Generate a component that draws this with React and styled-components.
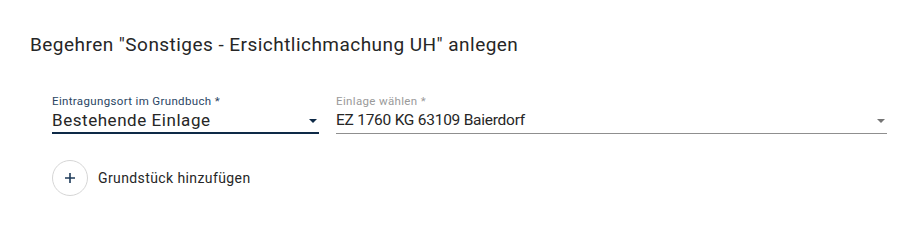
import React from 'react';
import styled, { createGlobalStyle } from 'styled-components';

const GlobalStyle = createGlobalStyle`
  html, body {
    margin: 0;
    padding: 0;
    background: #ffffff;
  }
  body {
    font-family: Roboto, "Noto Sans", "Liberation Sans", sans-serif;
    color: #212121;
  }
`;

const Page = styled.div`
  width: 901px;
  height: 226px;
  box-sizing: border-box;
  padding: 33px 14px 0 30px;
`;

const Title = styled.h1`
  margin: 0;
  font-size: 19px;
  line-height: 24px;
  font-weight: 400;
  letter-spacing: 0.46px;
  color: #262626;
`;

const Form = styled.div`
  padding: 37px 0 0 22px;
  display: flex;
  flex-direction: column;
  gap: 26px;
`;

const FieldRow = styled.div`
  display: flex;
  gap: 17px;
`;

const Field = styled.div`
  width: ${p => p.$width}px;
  display: flex;
  flex-direction: column;
  gap: 2px;
`;

const Label = styled.label`
  font-size: 11.5px;
  line-height: 14px;
  letter-spacing: 0.35px;
  color: ${p => (p.$focused ? '#2a4563' : '#9a9a9a')};
`;

const SelectBox = styled.div`
  display: flex;
  align-items: center;
  justify-content: space-between;
  padding-bottom: ${p => (p.$focused ? 2 : 3)}px;
  border-bottom: ${p => (p.$focused ? '2px solid #0e2a47' : '1px solid #8f8f8f')};
`;

const Value = styled.span`
  font-size: ${p => (p.$numeric ? 15.5 : 17)}px;
  line-height: 20px;
  letter-spacing: ${p => (p.$numeric ? -0.25 : 0.55)}px;
  color: #262626;
`;

const Arrow = styled.span`
  width: 0;
  height: 0;
  margin-right: 2px;
  margin-top: 2px;
  border-left: 4px solid transparent;
  border-right: 4px solid transparent;
  border-top: 4px solid ${p => (p.$focused ? '#0e2a47' : '#757575')};
`;

const AddButton = styled.button`
  display: flex;
  align-items: center;
  gap: 10px;
  padding: 0;
  border: none;
  background: none;
  cursor: pointer;
  font-family: inherit;
  align-self: flex-start;
`;

const Circle = styled.span`
  width: 36px;
  height: 36px;
  box-sizing: border-box;
  border-radius: 50%;
  border: 1px solid #d6d6d6;
  display: flex;
  align-items: center;
  justify-content: center;
`;

const ButtonText = styled.span`
  font-size: 14px;
  line-height: 20px;
  letter-spacing: 0.4px;
  color: #262626;
`;

const Select = ({ label, value, width, focused, numeric }) => (
  <Field $width={width}>
    <Label $focused={focused}>{label}</Label>
    <SelectBox $focused={focused}>
      <Value $numeric={numeric}>{value}</Value>
      <Arrow $focused={focused} />
    </SelectBox>
  </Field>
);

export default function App() {
  return (
    <>
      <GlobalStyle />
      <Page>
        <Title>Begehren "Sonstiges - Ersichtlichmachung UH" anlegen</Title>
        <Form>
          <FieldRow>
            <Select
              label="Eintragungsort im Grundbuch *"
              value="Bestehende Einlage"
              width={267}
              focused
            />
            <Select
              label="Einlage wählen *"
              value="EZ 1760 KG 63109 Baierdorf"
              width={551}
              numeric
            />
          </FieldRow>
          <AddButton type="button">
            <Circle>
              <svg width="12" height="12" viewBox="0 0 12 12">
                <path d="M6 1v10M1 6h10" stroke="#1f3b5a" strokeWidth="1.6" />
              </svg>
            </Circle>
            <ButtonText>Grundstück hinzufügen</ButtonText>
          </AddButton>
        </Form>
      </Page>
    </>
  );
}
